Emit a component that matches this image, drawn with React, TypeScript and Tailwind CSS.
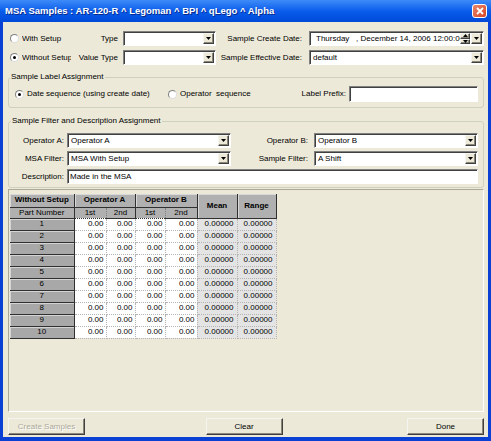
import React from "react";

const sunken =
  "border border-t-[#808080] border-l-[#808080] border-b-white border-r-white shadow-[inset_1px_1px_0_#404040]";
const raised =
  "border border-t-[#f4f4f0] border-l-[#f4f4f0] border-b-[#404040] border-r-[#404040] shadow-[inset_-1px_-1px_0_#8a8778]";

const Arrow = ({ up }: { up?: boolean }) => (
  <svg width="5" height="3" viewBox="0 0 5 3">
    <path d={up ? "M0 3h5L2.5 0z" : "M0 0h5L2.5 3z"} fill="#000" />
  </svg>
);

const DropButton = () => (
  <div className={`flex w-[11px] items-center justify-center bg-[#ECE9D8] ${raised}`}>
    <Arrow />
  </div>
);

interface ComboProps {
  value?: string;
  className?: string;
}

const Combo = ({ value = "", className = "" }: ComboProps) => (
  <div className={`flex h-[15px] shrink-0 bg-white p-[1px] ${sunken} ${className}`}>
    <span className="flex-1 overflow-hidden whitespace-nowrap pl-[2px] leading-[11px]">{value}</span>
    <DropButton />
  </div>
);

const TextBox = ({ value = "", className = "" }: ComboProps) => (
  <div className={`flex shrink-0 items-center bg-white ${sunken} ${className}`}>
    <span className="pl-[2px] whitespace-nowrap">{value}</span>
  </div>
);

const Radio = ({ checked }: { checked?: boolean }) => (
  <span className="flex h-[9px] w-[9px] shrink-0 items-center justify-center rounded-full border border-t-[#808080] border-l-[#808080] border-b-[#dcdcdc] border-r-[#dcdcdc] bg-white">
    {checked && <span className="h-[3px] w-[3px] rounded-full bg-black" />}
  </span>
);

const Button = ({ label, disabled, className = "" }: { label: string; disabled?: boolean; className?: string }) => (
  <div
    className={`flex h-[17px] w-[77px] items-center justify-center bg-[#ECE9D8] ${raised} ${
      disabled ? "text-[#aca899] [text-shadow:1px_1px_0_#fff]" : "text-black"
    } ${className}`}
  >
    {label}
  </div>
);

const hdr =
  "bg-[#b0b0b0] border-r border-b border-r-[#303030] border-b-[#303030] shadow-[inset_1px_1px_0_#d8d8d8] p-0 font-bold text-center";
const sub = "bg-[#b0b0b0] border-b border-b-[#303030] p-0 font-normal text-center";
const cell = "p-0 pr-[2px] text-right border-r border-b border-dotted border-[#b4b4b4] bg-white";
const calc = "p-0 pr-[3px] text-right border-r border-b border-dotted border-[#b4b4b4] bg-[#e4e4e4]";

const rows = [1, 2, 3, 4, 5, 6, 7, 8, 9, 10];

export default function App() {
  return (
    <div className="flex h-[441px] w-[491px] flex-col overflow-hidden bg-[#0b40d4] font-['Liberation_Sans',Arial,sans-serif] text-[8px] text-black">
      {/* title bar */}
      <div className="flex h-[22px] shrink-0 items-center bg-linear-to-b from-[#3d8bf8] via-[#0a5ceb] to-[#0049d9] pl-[5px] pr-[4px]">
        <span className="flex-1 text-[9.5px] font-bold text-white [text-shadow:1px_1px_0_#0a2a8a]">
          MSA Samples : AR-120-R ^ Legoman ^ BPI ^ qLego ^ Alpha
        </span>
        <div className="flex h-[14px] w-[15px] items-center justify-center rounded-[3px] border border-white bg-linear-to-br from-[#e9866a] to-[#d7431f]">
          <svg width="8" height="8" viewBox="0 0 8 8">
            <path d="M1 1l6 6M7 1L1 7" stroke="#fff" strokeWidth="1.8" />
          </svg>
        </div>
      </div>

      <div className="flex flex-1">
        <div className="w-[3px] bg-[#0b40d4]" />
        <div className="flex flex-1 flex-col bg-[#ECE9D8] pl-[5px] pr-[4px] pt-[9px]">
          {/* top rows */}
          <div className="flex h-[15px] items-center">
            <div className="flex w-[66px] items-center pl-[2px]">
              <Radio />
              <span className="ml-[3px] w-[49px] overflow-hidden whitespace-nowrap">With Setup</span>
            </div>
            <span className="w-[44px] text-right">Type</span>
            <Combo className="ml-[5px] w-[93px]" />
            <span className="w-[86px] text-right">Sample Create Date:</span>
            <div className={`ml-[7px] flex h-[15px] w-[175px] bg-white p-[1px] ${sunken}`}>
              <span className="flex-1 overflow-hidden whitespace-pre pl-[5px] leading-[11px]">
                Thursday   , December 14, 2006 12:00:00
              </span>
              <div className="flex w-[10px] flex-col">
                <div className={`flex flex-1 items-center justify-center bg-[#ECE9D8] ${raised}`}>
                  <Arrow up />
                </div>
                <div className={`flex flex-1 items-center justify-center bg-[#ECE9D8] ${raised}`}>
                  <Arrow />
                </div>
              </div>
              <div className="w-[1px]" />
              <DropButton />
            </div>
          </div>
          <div className="mt-[4px] flex h-[15px] items-center">
            <div className="flex w-[66px] items-center pl-[2px]">
              <Radio checked />
              <span className="ml-[3px] w-[49px] overflow-hidden whitespace-nowrap">Without Setup</span>
            </div>
            <span className="w-[44px] text-right">Value Type</span>
            <Combo className="ml-[5px] w-[93px]" />
            <span className="w-[86px] text-right">Sample Effective Date:</span>
            <Combo value="default" className="ml-[7px] w-[175px]" />
          </div>

          {/* Sample Label Assignment */}
          <fieldset className="mt-[7px] rounded-[3px] border border-[#d0d0bf]">
            <legend className="ml-[1px] px-[1px] leading-[10px]">Sample Label Assignment</legend>
            <div className="flex items-center pb-[5px] pl-[6px] pr-[5px] pt-[4px]">
              <div className="flex w-[153px] items-center">
                <Radio checked />
                <span className="ml-[3px]">Date sequence (using create date)</span>
              </div>
              <div className="flex items-center">
                <Radio />
                <span className="ml-[3px] whitespace-pre">Operator  sequence</span>
              </div>
              <span className="flex-1 text-right">Label Prefix:</span>
              <TextBox className="ml-[3px] h-[16px] w-[129px]" />
            </div>
          </fieldset>

          {/* Sample Filter and Description Assignment */}
          <fieldset className="mt-[8px] rounded-[3px] border border-[#d0d0bf]">
            <legend className="ml-[2px] px-[1px] leading-[10px]">Sample Filter and Description Assignment</legend>
            <div className="flex flex-col gap-[3px] pb-[3px] pr-[5px] pt-[7px]">
              <div className="flex h-[15px] items-center">
                <span className="w-[55px] text-right">Operator A:</span>
                <Combo value="Operator A" className="ml-[3px] w-[164px]" />
                <span className="w-[77px] text-right">Operator B:</span>
                <Combo value="Operator B" className="ml-[6px] w-[164px]" />
              </div>
              <div className="flex h-[15px] items-center">
                <span className="w-[55px] text-right">MSA Filter:</span>
                <Combo value="MSA With Setup" className="ml-[3px] w-[164px]" />
                <span className="w-[77px] text-right">Sample Filter:</span>
                <Combo value="A Shift" className="ml-[6px] w-[164px]" />
              </div>
              <div className="flex h-[15px] items-center">
                <span className="w-[55px] text-right">Description:</span>
                <TextBox value="Made in the MSA" className="ml-[3px] h-[15px] w-[411px]" />
              </div>
            </div>
          </fieldset>

          {/* grid panel */}
          <div className="mt-[1px] h-[223px] border border-t-[#aca899] border-l-[#aca899] border-b-white border-r-white pl-[1px] pt-[4px]">
            <table className="table-fixed border-collapse leading-[10px]">
              <colgroup>
                <col className="w-[64px]" />
                <col className="w-[32px]" />
                <col className="w-[29px]" />
                <col className="w-[30px]" />
                <col className="w-[32px]" />
                <col className="w-[40px]" />
                <col className="w-[39px]" />
              </colgroup>
              <thead>
                <tr className="h-[13px]">
                  <th className={hdr}>Without Setup</th>
                  <th colSpan={2} className={hdr}>
                    Operator A
                  </th>
                  <th colSpan={2} className={hdr}>
                    Operator B
                  </th>
                  <th rowSpan={2} className={hdr}>
                    Mean
                  </th>
                  <th rowSpan={2} className={hdr}>
                    Range
                  </th>
                </tr>
                <tr className="h-[10px]">
                  <th className={`${sub} border-r border-r-[#303030]`}>Part Number</th>
                  <th className={`${sub} border-r border-dotted border-r-[#808080]`}>1st</th>
                  <th className={`${sub} border-r border-r-[#303030]`}>2nd</th>
                  <th className={`${sub} border-r border-dotted border-r-[#808080]`}>1st</th>
                  <th className={`${sub} border-r border-r-[#303030]`}>2nd</th>
                </tr>
              </thead>
              <tbody>
                {rows.map((n) => (
                  <tr key={n} className="h-[12px]">
                    <td className="border-b border-r border-b-[#303030] border-r-[#303030] bg-[#a8a8a8] p-0 text-center shadow-[inset_1px_1px_0_#d4d4d4]">
                      {n}
                    </td>
                    <td className={cell}>0.00</td>
                    <td className={cell}>0.00</td>
                    <td className={cell}>0.00</td>
                    <td className={cell}>0.00</td>
                    <td className={calc}>0.00000</td>
                    <td className={calc}>0.00000</td>
                  </tr>
                ))}
              </tbody>
            </table>
          </div>

          {/* buttons */}
          <div className="mt-[6px] flex justify-between">
            <Button label="Create Samples" disabled />
            <Button label="Clear" className="mr-[4px]" />
            <Button label="Done" />
          </div>
        </div>
        <div className="w-[3px] bg-[#0b40d4]" />
      </div>
      <div className="h-[4px] shrink-0 bg-[#0b40d4]" />
    </div>
  );
}
